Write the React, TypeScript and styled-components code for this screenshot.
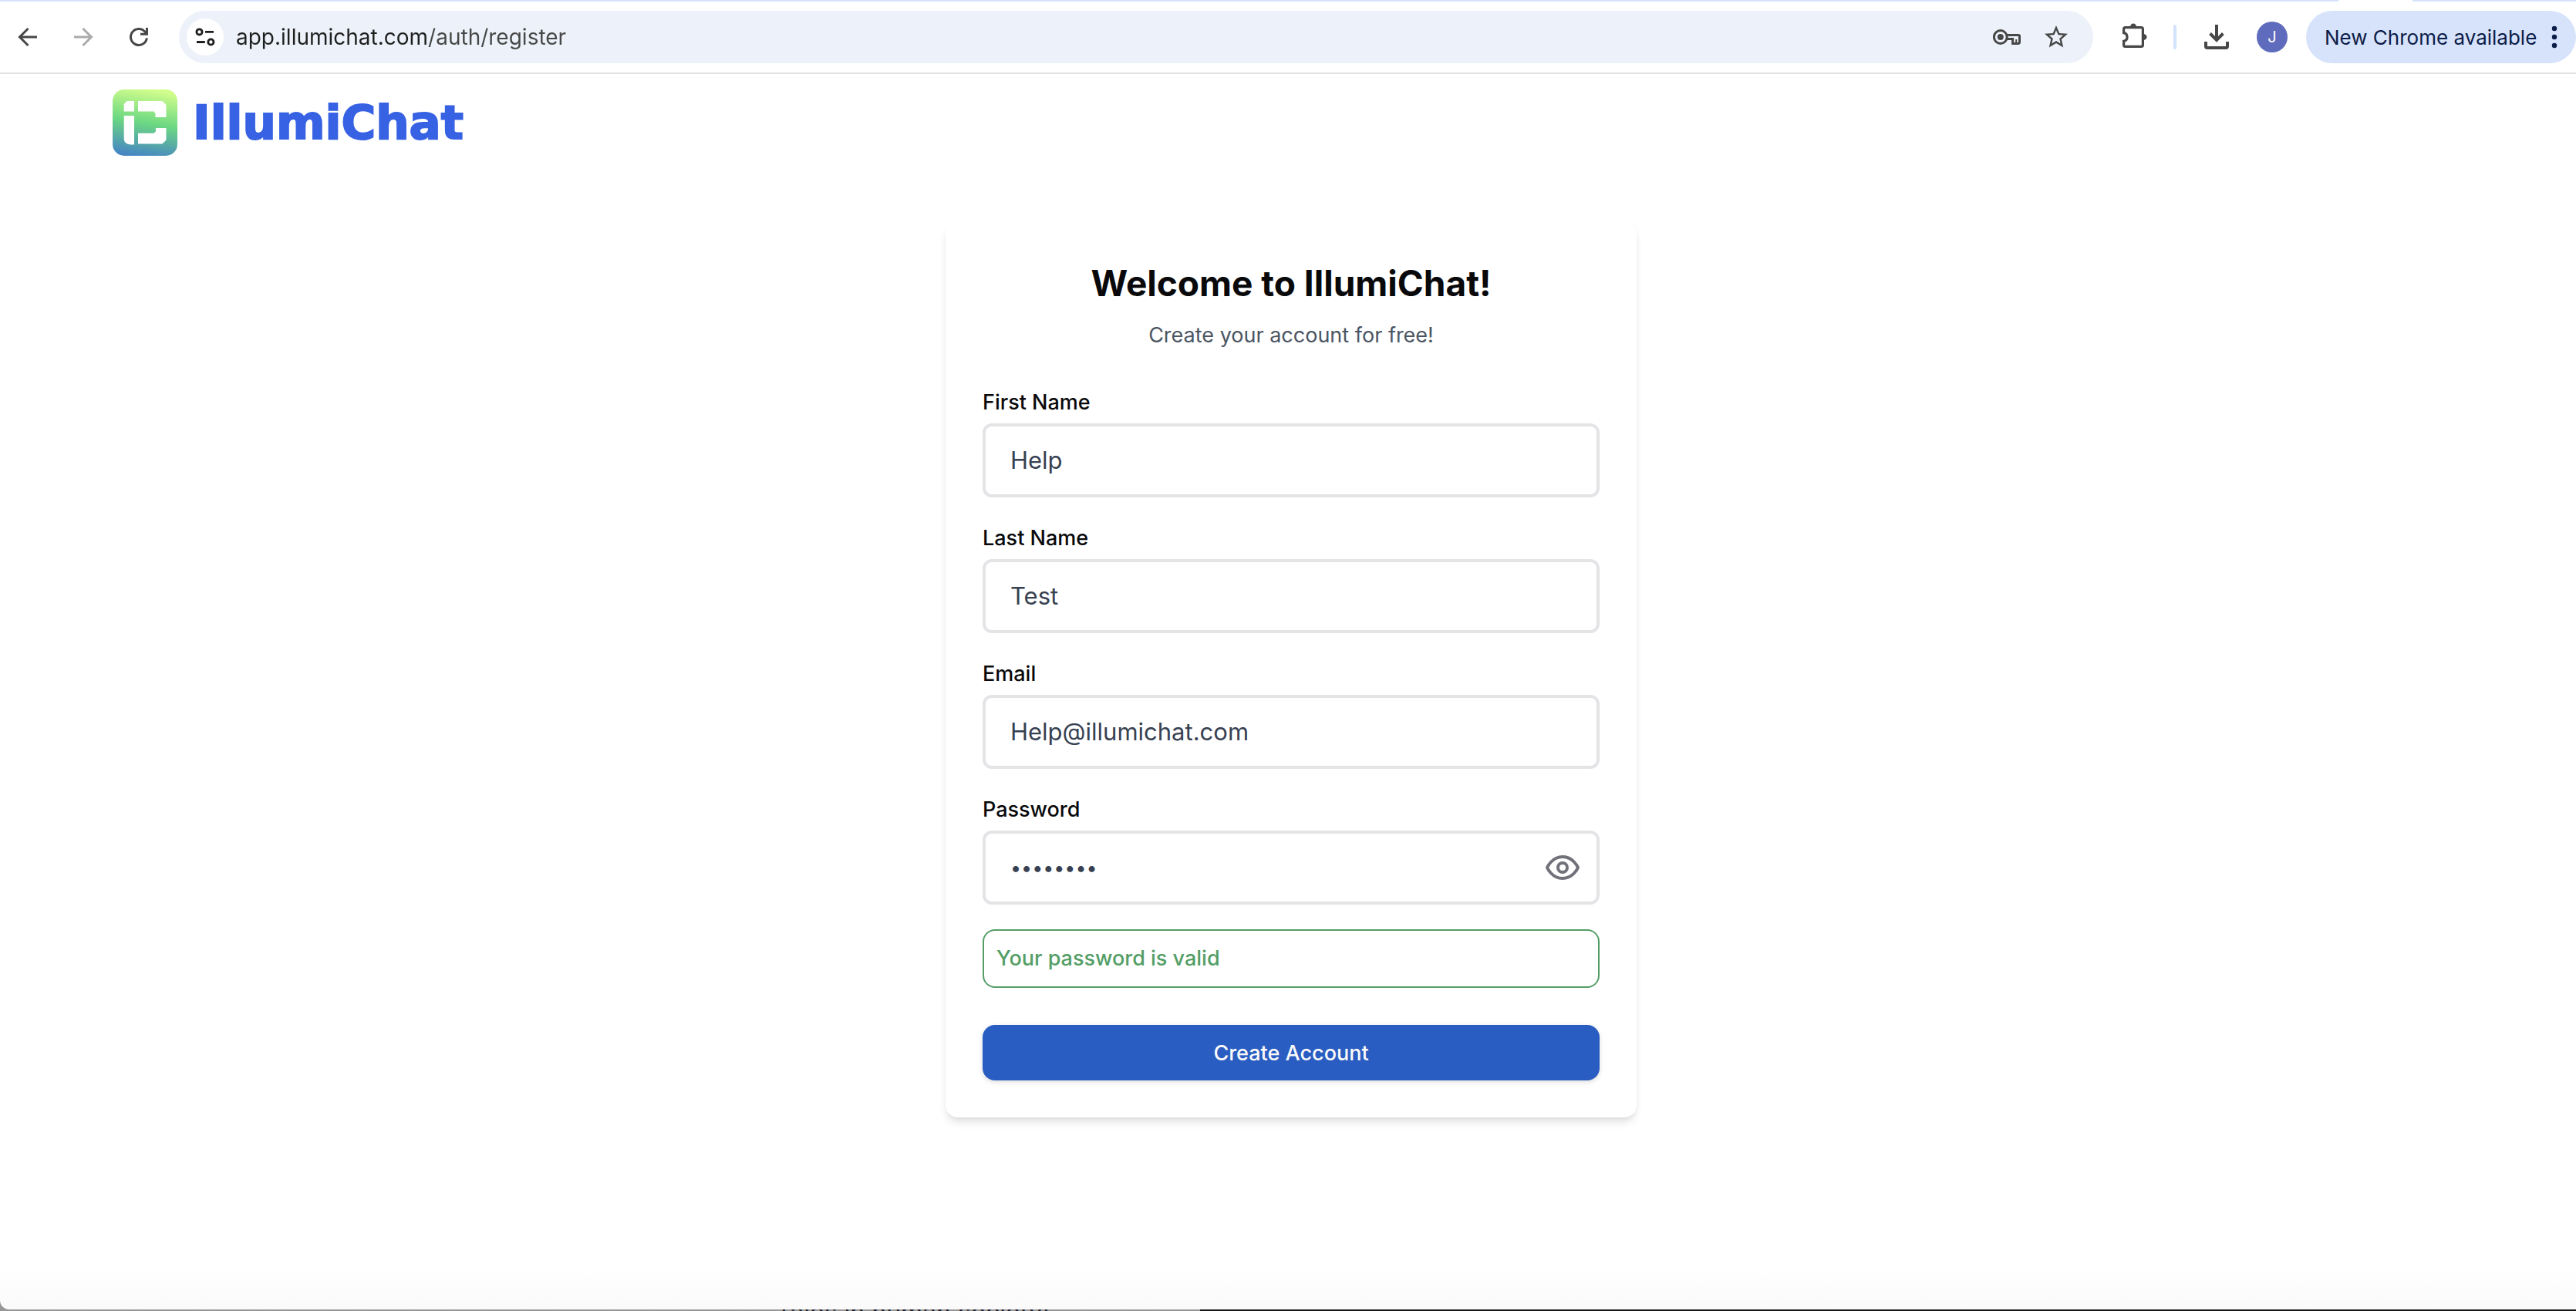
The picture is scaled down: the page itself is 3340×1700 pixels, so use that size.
import React, { useState } from "react";
import styled, { createGlobalStyle } from "styled-components";

const sans = `Inter, "Liberation Sans", sans-serif`;

const GlobalStyle = createGlobalStyle`
  *, *::before, *::after { box-sizing: border-box; }
  body { margin: 0; background: #fff; font-family: ${sans}; color: #09090b; }
  button { border: 0; padding: 0; background: none; font: inherit; cursor: pointer; }
`;

const Window = styled.div`
  display: flex;
  flex-direction: column;
  min-height: 100vh;
  background: #969696;
`;

const TabEdge = styled.div`
  display: flex;
  justify-content: flex-end;
  height: 2px;
  padding-right: 212px;
  background: #d7e2fb;
`;

const ActiveTab = styled.span`
  width: 96px;
  background: #fff;
`;

const Toolbar = styled.header`
  display: flex;
  align-items: center;
  height: 94px;
  padding-left: 18px;
  border-bottom: 2px solid #e1e1e1;
  background: #fff;
  color: #474747;
`;

const Navigation = styled.nav`
  display: flex;
  gap: 36px;
  margin-right: 34px;
`;

const IconButton = styled.button<{ $muted?: boolean }>`
  display: flex;
  flex: none;
  color: ${(p) => (p.$muted ? "#ababab" : "#474747")};
`;

const AddressBar = styled.div`
  display: flex;
  flex: 1;
  align-items: center;
  gap: 28px;
  height: 68px;
  margin-right: 36px;
  padding: 0 30px 0 10px;
  border-radius: 34px;
  background: #edf2fa;
`;

const Location = styled.div`
  display: flex;
  flex: 1;
  align-items: center;
  gap: 16px;
`;

const SiteInfo = styled.button`
  display: flex;
  align-items: center;
  justify-content: center;
  width: 48px;
  height: 48px;
  border-radius: 50%;
  background: #fff;
  color: #1f1f1f;
`;

const UrlInput = styled.input`
  flex: 1;
  min-width: 0;
  border: 0;
  padding: 0;
  outline: 0;
  background: linear-gradient(to right, #1f1f1f 250px, #474747 250px);
  background-clip: text;
  -webkit-text-fill-color: transparent;
  font: 400 28px/36px ${sans};
`;

const Divider = styled.span`
  width: 4px;
  height: 32px;
  margin: 0 34px 0 32px;
  border-radius: 2px;
  background: #d3e3fd;
`;

const Avatar = styled.button`
  width: 40px;
  height: 40px;
  margin: 0 24px 0 34px;
  border-radius: 50%;
  background: #5f6bbc;
  color: #fff;
  font-size: 20px;
`;

const UpdateButton = styled.button`
  display: flex;
  align-items: center;
  justify-content: space-between;
  min-width: 350px;
  height: 68px;
  padding: 0 10px 0 24px;
  border-radius: 34px;
  background: #d7e2fb;
  color: #0a1c47;
  font-size: 26px;
`;

const Page = styled.main`
  display: flex;
  flex: 1;
  flex-direction: column;
  padding: 20px 0 0 8px;
  border-bottom-left-radius: 12px;
  background: linear-gradient(to bottom, #fff calc(100% - 50px), #fafafa);
`;

const Brand = styled.a`
  display: flex;
  align-items: center;
  align-self: flex-start;
  gap: 20px;
  margin-left: 138px;
  color: #3762e3;
  text-decoration: none;
`;

const Wordmark = styled.span`
  font: 700 61px/64px "DejaVu Sans", sans-serif;
  -webkit-text-stroke: 2px #3762e3;
`;

const Card = styled.section`
  width: 100%;
  max-width: 896px;
  margin: 85px auto 48px;
  padding: 48px;
  border-radius: 16px;
  background: #fff;
  box-shadow: 0 8px 12px -2px rgba(0, 0, 0, 0.1), 0 4px 8px -4px rgba(0, 0, 0, 0.1);
`;

const Title = styled.h1`
  margin: 0 0 16px;
  font-size: 46px;
  line-height: 64px;
  text-align: center;
`;

const Subtitle = styled.p`
  margin: 0 0 52px;
  font-size: 27px;
  line-height: 40px;
  color: #4b5563;
  text-align: center;
`;

const Form = styled.form`
  display: flex;
  flex-direction: column;
`;

const Fields = styled.div`
  display: flex;
  flex-direction: column;
  gap: 38px;
`;

const Label = styled.label`
  display: block;
  margin-bottom: 12px;
  font-size: 27px;
  line-height: 30px;
  font-weight: 500;
`;

const InputBox = styled.div`
  display: flex;
  align-items: center;
  height: 96px;
  padding: 0 20px 0 32px;
  border: 4px solid #e4e4e7;
  border-radius: 12px;
`;

const TextInput = styled.input`
  flex: 1;
  min-width: 0;
  padding: 0;
  border: 0;
  outline: 0;
  background: none;
  color: #374151;
  font: 400 31px/48px ${sans};

  &[type="password"] { font-size: 25px; }
`;

const EyeButton = styled.button`
  display: flex;
  color: #71717a;
`;

const ValidMessage = styled.p`
  margin: 32px 0 48px;
  padding: 16px;
  border: 2px solid #549e66;
  border-radius: 16px;
  color: #549e66;
  font-size: 27px;
  line-height: 40px;
  font-weight: 500;
`;

const SubmitButton = styled.button`
  height: 72px;
  border-radius: 16px;
  background: #2a5dc1;
  box-shadow: 0 2px 6px rgba(0, 0, 0, 0.15);
  color: #fafafa;
  font-size: 27px;
  font-weight: 500;
`;

const Desktop = styled.div`
  display: flex;
  justify-content: space-between;
  height: 2px;
  overflow: hidden;
`;

const BackgroundTitle = styled.span`
  margin: -14px 0 0 1006px;
  color: #1c1c2a;
  font-size: 32px;
  line-height: 36px;
  white-space: nowrap;
`;

const DarkWindow = styled.span`
  width: 1784px;
  background: #141416;
`;

const Back = () => (
  <svg width="36" height="36" viewBox="0 0 36 36" fill="none" stroke="currentColor" strokeWidth="3">
    <path d="M30 18H8M18.5 7L7.5 18l11 11" />
  </svg>
);

const Forward = () => (
  <svg width="36" height="36" viewBox="0 0 36 36" fill="none" stroke="currentColor" strokeWidth="3">
    <path d="M6 18h22M17.5 7l11 11-11 11" />
  </svg>
);

const Reload = () => (
  <svg width="36" height="36" viewBox="0 0 36 36" fill="none" stroke="currentColor" strokeWidth="3">
    <path d="M28.4 19.4A10.5 10.5 0 1 1 26 11.2l2 2.6" />
    <path d="M28.5 6v8.3H20" />
  </svg>
);

const Tune = () => (
  <svg width="32" height="32" viewBox="0 0 32 32" fill="none" stroke="currentColor" strokeWidth="2.8">
    <circle cx="8.5" cy="9.4" r="3.6" />
    <path d="M16 9.4h11M5 22.5h10.8" />
    <circle cx="23.4" cy="22.5" r="3.6" />
  </svg>
);

const Key = () => (
  <svg width="36" height="36" viewBox="0 0 36 36" fill="none" stroke="currentColor" strokeWidth="3">
    <circle cx="9.8" cy="18" r="8.4" />
    <circle cx="9.8" cy="18" r="4" fill="currentColor" stroke="none" />
    <path d="M17 15.6h16a1.5 1.5 0 0 1 1.5 1.5V25a1.5 1.5 0 0 1-1.5 1.5h-7.4v-5.9H17" />
    <path d="M30.2 21v5" strokeWidth="2" />
  </svg>
);

const Star = () => (
  <svg width="36" height="36" viewBox="0 0 24 24" fill="currentColor">
    <path d="M22 9.24l-7.19-.62L12 2 9.19 8.63 2 9.24l5.46 4.73L5.82 21 12 17.27 18.18 21l-1.63-7.03L22 9.24zM12 15.4l-3.76 2.27 1-4.28-3.32-2.88 4.38-.38L12 6.1l1.71 4.04 4.38.38-3.32 2.88 1 4.28L12 15.4z" />
  </svg>
);

const Puzzle = () => (
  <svg width="36" height="36" viewBox="0 0 36 36" fill="none" stroke="currentColor" strokeWidth="3.2">
    <path d="M5.4 5.6h21.2a1.8 1.8 0 0 1 1.8 1.8v21.2a1.8 1.8 0 0 1-1.8 1.8H5.4a1.8 1.8 0 0 1-1.8-1.8v-5.2a5.5 5.5 0 0 0 0-10.8V7.4a1.8 1.8 0 0 1 1.8-1.8z" />
    <path d="M12 5a4 4.6 0 0 1 8 0zM29 14a4.6 4 0 0 1 0 8z" fill="currentColor" stroke="none" />
  </svg>
);

const Download = () => (
  <svg width="36" height="36" viewBox="0 0 36 36" fill="none" stroke="currentColor" strokeWidth="4">
    <path d="M18 2v20M9.6 13.5l8.4 8.4 8.4-8.4" />
    <path d="M4 24v6a2 2 0 0 0 2 2h24a2 2 0 0 0 2-2v-6" />
  </svg>
);

const Dots = () => (
  <svg width="36" height="36" viewBox="0 0 36 36" fill="currentColor">
    <circle cx="18" cy="7" r="3.2" />
    <circle cx="18" cy="18" r="3.2" />
    <circle cx="18" cy="29" r="3.2" />
  </svg>
);

const Eye = () => (
  <svg width="48" height="48" viewBox="0 0 24 24" fill="none" stroke="currentColor" strokeWidth="2" strokeLinecap="round" strokeLinejoin="round">
    <path d="M2 12s3-7 10-7 10 7 10 7-3 7-10 7-10-7-10-7Z" />
    <circle cx="12" cy="12" r="3" />
  </svg>
);

const Logo = () => (
  <svg width="84" height="86" viewBox="0 0 84 86">
    <defs>
      <linearGradient id="logo-fill" x1="0.58" y1="0" x2="0.42" y2="1">
        <stop offset="0" stopColor="#d2fd8c" />
        <stop offset="0.5" stopColor="#6cd882" />
        <stop offset="1" stopColor="#4687c2" />
      </linearGradient>
    </defs>
    <rect width="84" height="86" rx="15" fill="url(#logo-fill)" />
    <g fill="#fff">
      <path d="M18.5 15H28v13.5H14.7V19z" />
      <path d="M14.7 34H28v37.5h-5q-8.3-1-8.3-8z" />
      <path d="M33 15h31.5l5 5v16h-14v-4.5l-2-3H33z" />
      <path d="M69.5 50v15.5l-5 5H33V56.7h20.5l2.5-2.500V50z" />
    </g>
  </svg>
);

type FieldProps = {
  id: string;
  label: string;
  type?: string;
  value: string;
  children?: React.ReactNode;
};

const Field = ({ id, label, type = "text", value, children }: FieldProps) => (
  <div>
    <Label htmlFor={id}>{label}</Label>
    <InputBox>
      <TextInput id={id} type={type} defaultValue={value} />
      {children}
    </InputBox>
  </div>
);

export default function App() {
  const [visible, setVisible] = useState(false);

  return (
    <Window>
      <GlobalStyle />
      <TabEdge>
        <ActiveTab />
      </TabEdge>
      <Toolbar>
        <Navigation>
          <IconButton aria-label="Back"><Back /></IconButton>
          <IconButton aria-label="Forward" $muted><Forward /></IconButton>
          <IconButton aria-label="Reload"><Reload /></IconButton>
        </Navigation>
        <AddressBar>
          <Location>
            <SiteInfo aria-label="Site information"><Tune /></SiteInfo>
            <UrlInput aria-label="Address" defaultValue="app.illumichat.com/auth/register" />
          </Location>
          <IconButton aria-label="Passwords"><Key /></IconButton>
          <IconButton aria-label="Bookmark"><Star /></IconButton>
        </AddressBar>
        <IconButton aria-label="Extensions"><Puzzle /></IconButton>
        <Divider />
        <IconButton aria-label="Downloads"><Download /></IconButton>
        <Avatar aria-label="Profile J">J</Avatar>
        <UpdateButton>
          New Chrome available
          <Dots />
        </UpdateButton>
      </Toolbar>
      <Page>
        <Brand href="#">
          <Logo />
          <Wordmark>IllumiChat</Wordmark>
        </Brand>
        <Card>
          <Title>Welcome to IllumiChat!</Title>
          <Subtitle>Create your account for free!</Subtitle>
          <Form onSubmit={(event) => event.preventDefault()}>
            <Fields>
              <Field id="first-name" label="First Name" value="Help" />
              <Field id="last-name" label="Last Name" value="Test" />
              <Field id="email" label="Email" type="email" value="Help@illumichat.com" />
              <Field id="password" label="Password" type={visible ? "text" : "password"} value="password">
                <EyeButton type="button" aria-label="Show password" onClick={() => setVisible(!visible)}>
                  <Eye />
                </EyeButton>
              </Field>
            </Fields>
            <ValidMessage>Your password is valid</ValidMessage>
            <SubmitButton type="submit">Create Account</SubmitButton>
          </Form>
        </Card>
      </Page>
      <Desktop aria-hidden="true">
        <BackgroundTitle>Tales in human society!</BackgroundTitle>
        <DarkWindow />
      </Desktop>
    </Window>
  );
}
